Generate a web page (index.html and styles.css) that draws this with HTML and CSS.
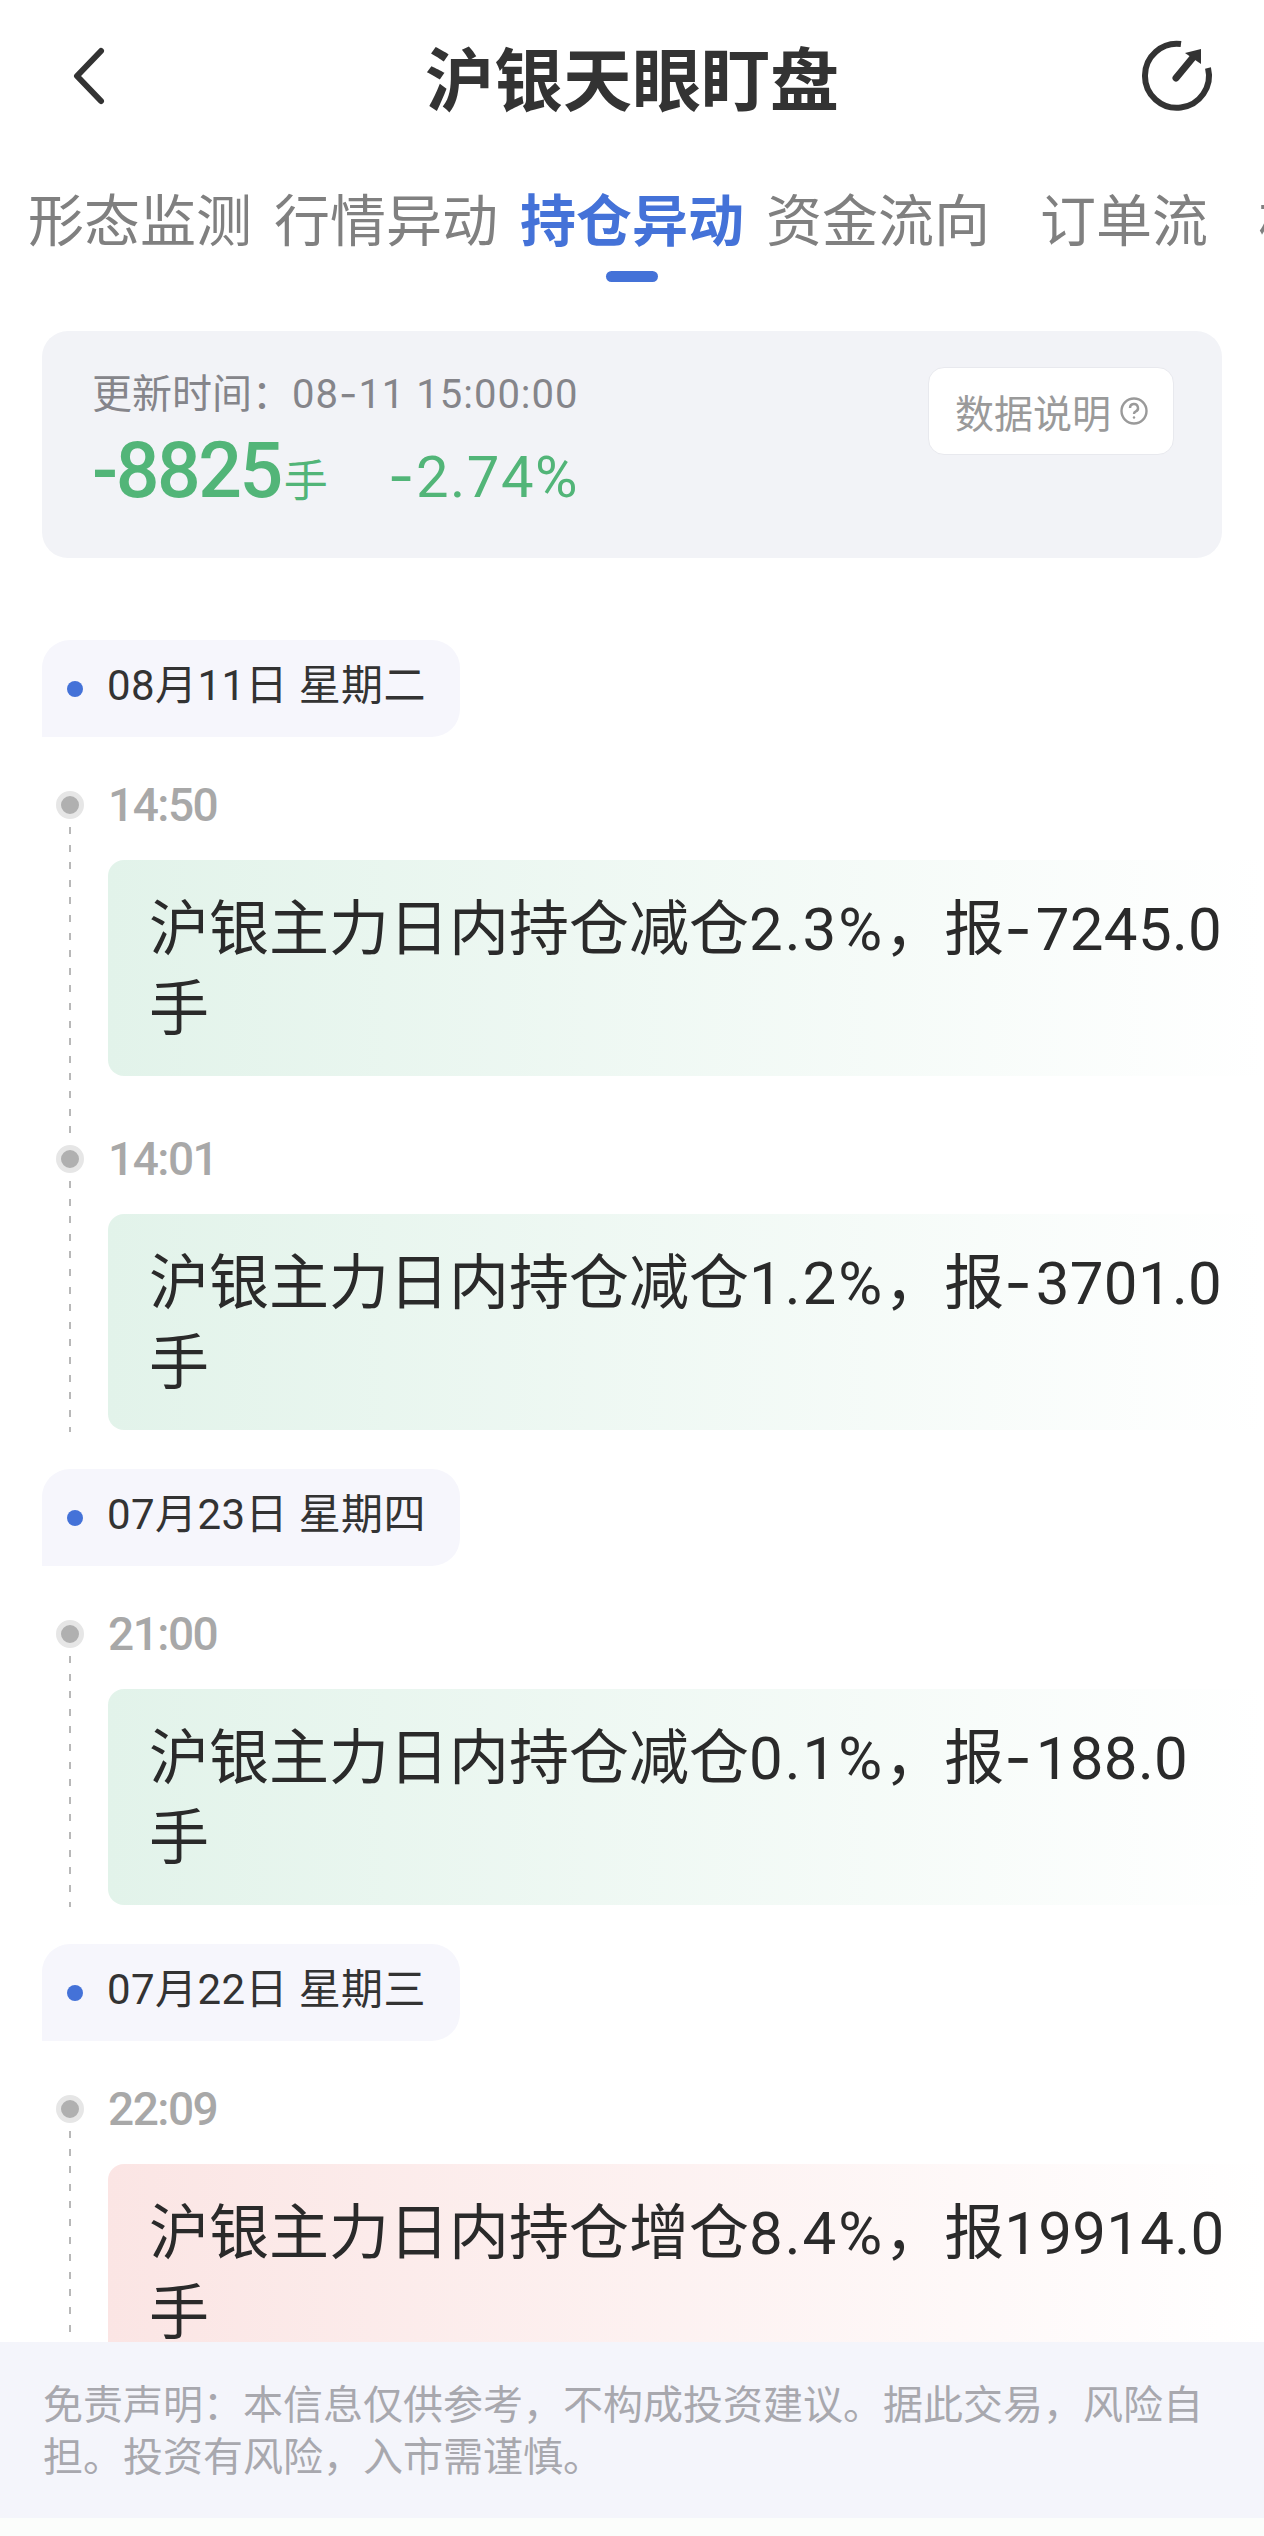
FILE: index.html
```html
<!DOCTYPE html>
<html lang="zh-CN">
<head>
    <meta charset="utf-8">
    <title>沪银天眼盯盘</title>
    <link rel="stylesheet" href="styles.css">
</head>
<body>
    <div class="page">
        <div class="header">
            <svg class="back-icon" viewBox="0 0 40 60"><path d="M33 5 L9 30 L33 55" /></svg>
            <div class="title">沪银天眼盯盘</div>
            <svg class="share-icon" viewBox="0 0 80 80">
                <path class="ring" d="M44 8 A32 32 0 1 0 71 32" />
                <path class="shaft" d="M39 42 L58 19" />
                <path class="head" d="M64 13 L48 17 L64 28 Z" />
            </svg>
        </div>

        <div class="tabs">
            <div class="tab">形态监测</div>
            <div class="tab">行情异动</div>
            <div class="tab active">持仓异动</div>
            <div class="tab">资金流向</div>
            <div class="tab">订单流</div>
            <div class="tab last">板块</div>
        </div>

        <div class="summary">
            <div>
                <div class="update-time">更新时间：<span class="stamp">08<span class="minus">-</span>11 15:00:00</span></div>
                <div class="numbers">
                    <span class="hands">-8825</span><span class="unit">手</span>
                    <span class="percent"><span class="minus">-</span>2.74%</span>
                </div>
            </div>
            <div class="explain">
                数据说明
                <svg class="help-icon" viewBox="0 0 28 28">
                    <circle cx="14" cy="14" r="12.5" />
                    <path d="M10 11 A4 4 0 1 1 15.5 14.7 Q14 15.4 14 17" />
                    <circle class="dot" cx="14" cy="20.5" r="1.2" />
                </svg>
            </div>
        </div>

        <div class="day">
            <div class="date"><i></i><span class="date-label">08月11日 星期二</span></div>
            <div class="item">
                <div class="rail"><span class="node"></span><span class="dash"></span></div>
                <div class="item-body">
                    <div class="time">14:50</div>
                    <div class="bubble down">沪银主力日内持仓减仓<span class="pct">2.3%</span>，报<span class="num"><span class="minus">-</span>7245.0</span>手</div>
                </div>
            </div>
            <div class="item">
                <div class="rail"><span class="node"></span><span class="dash"></span></div>
                <div class="item-body">
                    <div class="time">14:01</div>
                    <div class="bubble down">沪银主力日内持仓减仓<span class="pct">1.2%</span>，报<span class="num"><span class="minus">-</span>3701.0</span>手</div>
                </div>
            </div>
        </div>

        <div class="day">
            <div class="date"><i></i><span class="date-label">07月23日 星期四</span></div>
            <div class="item">
                <div class="rail"><span class="node"></span><span class="dash"></span></div>
                <div class="item-body">
                    <div class="time">21:00</div>
                    <div class="bubble down">沪银主力日内持仓减仓<span class="pct">0.1%</span>，报<span class="num"><span class="minus">-</span>188.0</span>手</div>
                </div>
            </div>
        </div>

        <div class="day">
            <div class="date"><i></i><span class="date-label">07月22日 星期三</span></div>
            <div class="item">
                <div class="rail"><span class="node"></span><span class="dash"></span></div>
                <div class="item-body">
                    <div class="time">22:09</div>
                    <div class="bubble up">沪银主力日内持仓增仓<span class="pct">8.4%</span>，报<span class="num">19914.0</span>手</div>
                </div>
            </div>
        </div>

        <div class="disclaimer">免责声明：本信息仅供参考，不构成投资建议。据此交易，风险自担。投资有风险，入市需谨慎。</div>
    </div>
</body>
</html>
```

FILE: styles.css
```css
html, body {
    margin: 0;
    background-color: #fff;
}

body {
    font-family: Roboto, "Noto Sans CJK SC", sans-serif;
}

.page {
    position: relative;
    width: 1264px;
    height: 2536px;
    overflow: hidden;
}

/* wider hyphen than Roboto has; line-height 0 so it can't stretch the line */
.minus {
    font-family: Inter, sans-serif;
    line-height: 0;
}

.header {
    display: grid;
    grid-template-columns: 1fr auto 1fr;
    align-items: center;
    height: 152px;
    margin-bottom: 4px;
    padding: 0 47px 0 68px;
}

.back-icon {
    width: 40px;
    height: 60px;
    fill: none;
    stroke: #333;
    stroke-width: 6;
    stroke-linecap: round;
    stroke-linejoin: round;
}

.title {
    margin-left: -21px;
    font-size: 69px;
    font-weight: 700;
    color: #333;
}

.share-icon {
    justify-self: end;
    width: 80px;
    height: 80px;
}

.share-icon .ring, .share-icon .shaft {
    fill: none;
    stroke: #333;
    stroke-width: 6;
}

.share-icon .shaft {
    stroke-width: 7;
    stroke-linecap: round;
}

.share-icon .head {
    fill: #333;
}

.tabs {
    position: relative;
    display: flex;
    gap: 22px;
    height: 134px;
    padding: 27px 0 0 28px;
    box-sizing: border-box;
    white-space: nowrap;
}

.tab {
    flex: none;
    min-width: 224px;
    height: 78px;
    line-height: 78px;
    text-align: center;
    font-size: 56px;
    color: #808080;
}

.tab.last {
    min-width: 0;
}

.tab.active {
    position: relative;
    font-weight: 700;
    color: #4472d8;
}

.tab.active::after {
    content: "";
    position: absolute;
    left: 86px;
    top: 88px;
    width: 52px;
    height: 11px;
    border-radius: 6px;
    background-color: #4472d8;
}

.summary {
    display: flex;
    justify-content: space-between;
    align-items: flex-start;
    height: 227px;
    margin: 41px 42px 0;
    padding: 36px 50px 0;
    box-sizing: border-box;
    background-color: #f2f3f7;
    border-radius: 26px;
}

.update-time {
    line-height: 52px;
    padding-top: 2px;
    font-size: 40px;
    color: #85858a;
}

.stamp {
    letter-spacing: 1px;
}

.numbers {
    display: flex;
    align-items: baseline;
    margin-top: 12px;
    height: 76px;
    line-height: 76px;
    color: #52b578;
}

.hands {
    font-size: 77px;
    font-weight: 500;
    letter-spacing: -2.5px;
}

.unit {
    margin-left: 3px;
    font-size: 44px;
}

.percent {
    margin-left: 60px;
    font-size: 58px;
    letter-spacing: 1.5px;
}

.explain {
    display: flex;
    align-items: center;
    gap: 9px;
    width: 246px;
    height: 88px;
    margin-right: -2px;
    padding-left: 26px;
    box-sizing: border-box;
    background-color: #fff;
    border: 1px solid #e8e9ee;
    border-radius: 16px;
    font-size: 39px;
    color: #9a9a9a;
}

.help-icon {
    width: 28px;
    height: 28px;
    fill: none;
    stroke: #9a9a9a;
    stroke-width: 2.4;
}

.help-icon .dot {
    fill: #9a9a9a;
    stroke: none;
}

.day {
    margin-top: 37px;
}

.summary + .day {
    margin-top: 82px;
}

.date {
    display: flex;
    align-items: center;
    width: fit-content;
    height: 97px;
    margin-left: 42px;
    padding: 0 34px 0 25px;
    background-color: #f6f6fc;
    border-radius: 28px 28px 28px 0;
    font-size: 42px;
    color: #333;
}

.date i {
    width: 16px;
    height: 16px;
    margin-right: 24px;
    border-radius: 50%;
    background-color: #4472d8;
}

.date-label {
    padding-bottom: 14px;
    letter-spacing: 0.4px;
}

.item {
    display: flex;
    margin-top: 43px;
    padding-left: 56px;
}

.item + .item {
    margin-top: 0;
}

.rail {
    display: flex;
    flex-direction: column;
    align-items: center;
    flex: none;
    width: 28px;
    margin-right: 24px;
    padding-top: 11px;
}

.node {
    flex: none;
    width: 18px;
    height: 18px;
    border: 5px solid #e6e6e6;
    border-radius: 50%;
    background-color: #b0b0b0;
}

.dash {
    flex: 1;
    width: 2px;
    margin-top: 8px;
    background-image: repeating-linear-gradient(to bottom, #b8b8b8 0, #b8b8b8 7px, transparent 7px, transparent 17.6px);
}

.item-body {
    flex: 1;
    padding-bottom: 2px;
}

.item:not(:last-child) .item-body {
    padding-bottom: 58px;
}

.time {
    height: 50px;
    line-height: 50px;
    font-size: 46px;
    font-weight: 500;
    letter-spacing: -1.5px;
    color: #a8a8a8;
}

.bubble {
    margin-top: 30px;
    padding: 30px 34px 26px 41px;
    border-radius: 16px 0 0 16px;
    font-size: 60px;
    line-height: 80px;
    color: #2a2a2a;
}

.pct {
    letter-spacing: 2px;
}

.num {
    letter-spacing: 0.3px;
}

.num .minus {
    letter-spacing: 4px;
}

.bubble.down {
    background-image: linear-gradient(to right, #e2f3ea, #fff);
}

.bubble.up {
    background-image: linear-gradient(to right, #fbe5e4, #fff);
}

/* sits over the list at the bottom of the screen */
.disclaimer {
    position: absolute;
    left: 0;
    right: 0;
    bottom: 0;
    padding: 38px 43px 34px;
    background-color: #f4f5fb;
    border-bottom: 18px solid #fbfdfb;
    font-size: 40px;
    line-height: 52px;
    color: #a8a8ae;
}
```
